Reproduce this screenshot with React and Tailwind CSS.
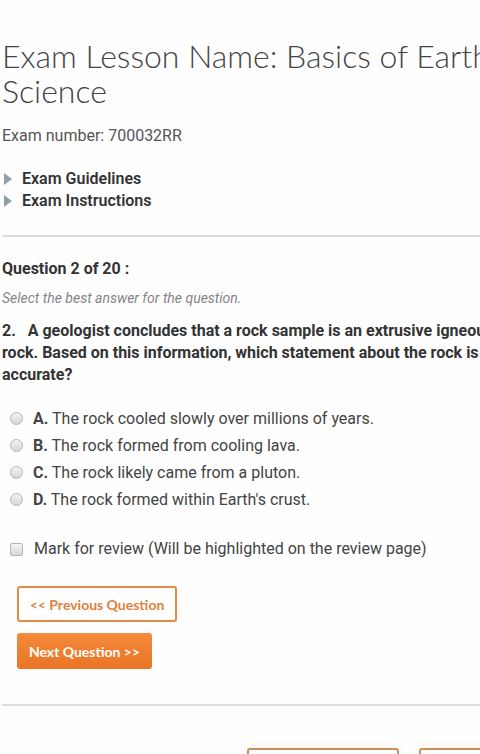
import React, { useState } from "react";

const options = [
  { key: "A", text: "The rock cooled slowly over millions of years." },
  { key: "B", text: "The rock formed from cooling lava." },
  { key: "C", text: "The rock likely came from a pluton." },
  { key: "D", text: "The rock formed within Earth's crust." },
];

const Arrow = () => (
  <span className="inline-block w-0 h-0 border-y-[6px] border-y-transparent border-l-[8px] border-l-[#8fa0ab] mr-[10px]"></span>
);

const App = () => {
  const [answer, setAnswer] = useState(null);
  const [review, setReview] = useState(false);

  return (
    <div className="w-[480px] h-[754px] overflow-hidden bg-[#fefefe]">
      <div className="w-[520px] pl-[2px] pt-[38px] text-[#333] font-['Roboto',sans-serif]">
        {/* Title */}
        <h1 className="w-[500px] font-['Lato',sans-serif] font-light text-[32px] leading-[35px] text-[#444]">
          Exam Lesson Name: Basics of Earth Science
        </h1>
        <p className="mt-[17px] text-[16px] leading-[22px] text-[#555]">Exam number: 700032RR</p>

        {/* Collapsibles */}
        <div className="mt-[21px] pl-[2px]">
          <div className="flex items-center text-[16px] leading-[22px] font-semibold text-[#333]">
            <Arrow />
            Exam Guidelines
          </div>
          <div className="flex items-center text-[16px] leading-[22px] font-semibold text-[#333]">
            <Arrow />
            Exam Instructions
          </div>
        </div>

        <div className="mt-[23px] h-[2px] bg-[#dcdcdc]"></div>

        {/* Question */}
        <p className="mt-[21px] text-[16px] leading-[22px] font-bold text-[#333]">Question 2 of 20 :</p>
        <p className="mt-[8px] text-[14px] leading-[20px] italic text-[#858585]">
          Select the best answer for the question.
        </p>
        <p className="mt-[12px] w-[515px] text-[16px] leading-[22px] font-bold text-[#333]">
          2.&nbsp;&nbsp; A geologist concludes that a rock sample is an extrusive igneous rock. Based on this
          information, which statement about the rock is accurate?
        </p>

        <div className="mt-[19px] flex flex-col">
          {options.map((o) => (
            <label key={o.key} className="flex items-center h-[27px] cursor-pointer">
              <span
                onClick={() => setAnswer(o.key)}
                className="ml-[8px] mr-[10px] w-[13px] h-[13px] rounded-full border border-[#b5b5b5] bg-gradient-to-b from-[#f4f4f4] to-[#d6d6d6]"
              ></span>
              <span className="text-[16px] text-[#444]">
                <span className="font-bold">{o.key}.</span> {o.text}
              </span>
            </label>
          ))}
        </div>

        <label className="mt-[25px] flex items-center cursor-pointer">
          <span
            onClick={() => setReview(!review)}
            className="ml-[8px] mr-[11px] w-[13px] h-[13px] rounded-[2px] border border-[#b5b5b5] bg-gradient-to-b from-[#f4f4f4] to-[#d6d6d6]"
          ></span>
          <span className="text-[16px] leading-[22px] text-[#444]">
            Mark for review (Will be highlighted on the review page)
          </span>
        </label>

        {/* Nav buttons */}
        <div className="mt-[26px] pl-[15px] flex flex-col items-start gap-[11px] font-['Lato',sans-serif]">
          <button className="h-[36px] w-[160px] border-2 border-[#e58a45] rounded-[3px] bg-white text-[#e07f3a] text-[14px] font-bold">
            &lt;&lt; Previous Question
          </button>
          <button className="h-[36px] w-[135px] rounded-[3px] bg-gradient-to-b from-[#f58a3a] to-[#ea7425] text-white text-[14px] font-bold">
            Next Question &gt;&gt;
          </button>
        </div>

        <div className="mt-[35px] h-[2px] bg-[#dcdcdc]"></div>

        <div className="mt-[42px] flex gap-[20px] pl-[245px]">
          <div className="shrink-0 w-[152px] h-[36px] border-2 border-[#c4925c] rounded-[3px] shadow-[0_0_8px_rgba(240,180,120,0.25)]"></div>
          <div className="shrink-0 w-[152px] h-[36px] border-2 border-[#c4925c] rounded-[3px] shadow-[0_0_8px_rgba(240,180,120,0.25)]"></div>
        </div>
      </div>
    </div>
  );
};

export default App;
